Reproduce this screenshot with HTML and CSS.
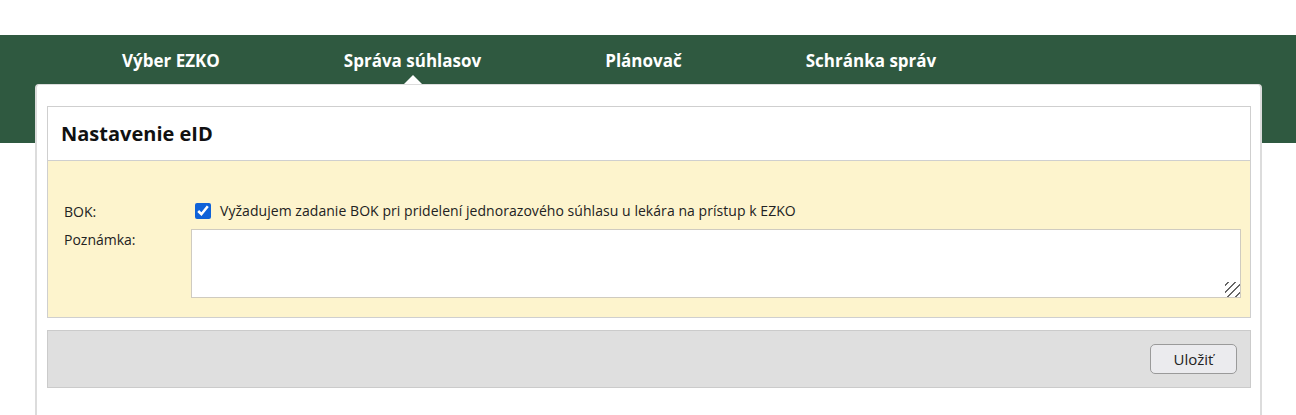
FILE: index.html
```html
<!DOCTYPE html>
<html lang="sk">
<head>
<meta charset="utf-8">
<title>Nastavenie eID</title>
<link rel="stylesheet" href="styles.css">
</head>
<body>
<header class="topbar">
  <nav class="nav">
    <a class="nav-item">Výber EZKO</a>
    <a class="nav-item active">Správa súhlasov</a>
    <a class="nav-item">Plánovač</a>
    <a class="nav-item">Schránka správ</a>
  </nav>
</header>
<main class="card">
  <section class="panel">
    <div class="panel-head"><h1>Nastavenie eID</h1></div>
    <div class="panel-body">
      <div class="row">
        <div class="label">BOK:</div>
        <label class="control check"><input type="checkbox" checked> Vyžadujem zadanie BOK pri pridelení jednorazového súhlasu u lekára na prístup k EZKO</label>
      </div>
      <div class="row">
        <div class="label">Poznámka:</div>
        <div class="control"><textarea class="note"></textarea></div>
      </div>
    </div>
  </section>
  <div class="actions">
    <button class="btn" type="button">Uložiť</button>
  </div>
</main>
</body>
</html>
```
FILE: styles.css
```css
html, body {
  margin: 0;
  padding: 0;
  background: #fff;
  font-family: "Open Sans", "Noto Sans", "Liberation Sans", sans-serif;
  color: #222;
}
body {
  padding-top: 35px;
}
.topbar {
  background: #2f5940;
  height: 108px;
}
.nav {
  display: flex;
  padding-left: 60px;
  height: 49px;
  align-items: center;
}
.nav-item {
  color: #fff;
  font-weight: 700;
  font-size: 17px;
  padding: 0 62px;
  position: relative;
  height: 49px;
  line-height: 52px;
}
.nav-item.active::after {
  content: "";
  position: absolute;
  left: 50%;
  bottom: 0;
  margin-left: -9px;
  border-left: 9px solid transparent;
  border-right: 9px solid transparent;
  border-bottom: 9px solid #fff;
}
.card {
  margin: -59px 34px 0 35px;
  background: #fff;
  border: 1px solid #dcdcdc;
  border-left-width: 2px;
  border-right-width: 2px;
  border-radius: 4px 4px 0 0;
  padding: 21px 9px 40px 10px;
  min-height: 400px;
}
.panel {
  border: 1px solid #cfcfcf;
}
.panel-head {
  background: #fff;
  height: 53px;
  border-bottom: 1px solid #cfcfcf;
  display: flex;
  align-items: center;
  padding-left: 13px;
}
.panel-head h1 {
  margin: 0;
  font-size: 20px;
  font-weight: 700;
  color: #111;
}
.panel-body {
  background: #fdf4cd;
  padding: 41px 9px 19px 16px;
  display: flex;
  flex-direction: column;
  gap: 8px;
}
.row {
  display: flex;
  align-items: flex-start;
  font-size: 14px;
  line-height: 18px;
}
.label {
  width: 127px;
  flex: none;
  color: #222;
}
.row:first-child .label {
  padding-top: 1px;
}
.row:nth-child(2) .label {
  padding-top: 2px;
}
.control {
  flex: 1;
}
.check {
  display: flex;
  align-items: center;
  gap: 9px;
  padding-left: 4px;
  letter-spacing: 0.05px;
}
.check input {
  margin: 0;
  width: 16px;
  height: 16px;
  accent-color: #0f62d8;
}
.note {
  display: block;
  width: 100%;
  box-sizing: border-box;
  height: 69px;
  border: 1px solid #cfcbc0;
  background: #fff;
  resize: vertical;
  margin: 0;
}
.note::-webkit-resizer {
  background: repeating-linear-gradient(135deg, transparent 0 2px, #666 2px 3.4px, transparent 3.4px 5px);
}
.actions {
  margin-top: 12px;
  background: #dfdfdf;
  border: 1px solid #cbcbcb;
  height: 56px;
  display: flex;
  align-items: center;
  justify-content: flex-end;
  padding-right: 13px;
}
.btn {
  width: 87px;
  height: 30px;
  border: 1px solid #9a9a9a;
  border-radius: 5px;
  background: #ebebee;
  font-family: inherit;
  font-size: 15px;
  color: #222;
}
```
